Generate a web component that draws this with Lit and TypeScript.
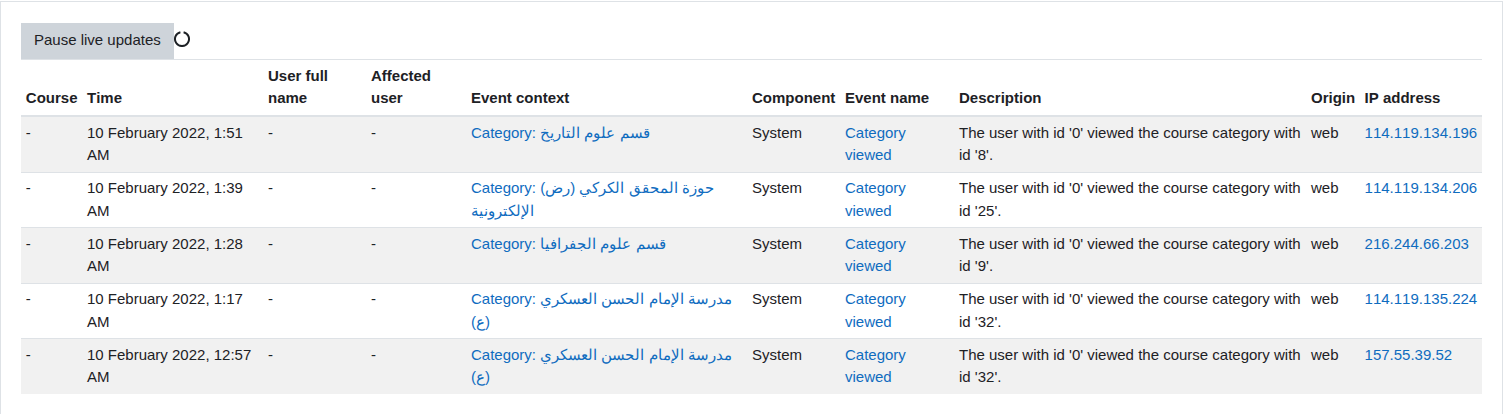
import { LitElement, html, css } from "lit";
import { customElement } from "lit/decorators.js";

const rows = [
  ["10 February 2022, 1:51 AM", "قسم علوم التاريخ", "8", "114.119.134.196"],
  ["10 February 2022, 1:39 AM", "حوزة المحقق الكركي (رض) الإلكترونية", "25", "114.119.134.206"],
  ["10 February 2022, 1:28 AM", "قسم علوم الجفرافيا", "9", "216.244.66.203"],
  ["10 February 2022, 1:17 AM", "مدرسة الإمام الحسن العسكري (ع)", "32", "114.119.135.224"],
  ["10 February 2022, 12:57 AM", "مدرسة الإمام الحسن العسكري (ع)", "32", "157.55.39.52"],
];

@customElement("app-root")
export class AppRoot extends LitElement {
  static styles = css`
    :host {
      display: block;
      font-family: "Liberation Sans", Arial, sans-serif;
      font-size: 15px;
      line-height: 22.5px;
      color: #1d2125;
      font-kerning: none;
    }
    .page {
      box-sizing: border-box;
      height: 413px;
      margin-top: 1px;
      overflow: hidden;
      border: 1px solid #dee2e6;
      border-bottom: 0;
      padding: 21px 20px 0 20px;
    }
    .bar {
      display: flex;
      align-items: flex-start;
    }
    .btn {
      background: #ced4da;
      color: #1d2125;
      border: 1px solid #ced4da;
      padding: 5px 12px 7px;
      font: inherit;
      height: 36px;
      box-sizing: border-box;
      border-radius: 0;
    }
    .spin {
      display: block;
      margin-top: 8px;
      width: 16px;
      height: 16px;
    }
    table {
      width: 100%;
      table-layout: fixed;
      border-collapse: collapse;
    }
    th, td {
      box-sizing: border-box;
      padding: 4.45px 4.8px 5.05px;
      vertical-align: top;
      border-top: 1px solid #dee2e6;
      text-align: left;
    }
    th {
      vertical-align: bottom;
      font-weight: 700;
      padding-top: 4.95px;
      padding-bottom: 5.25px;
      border-bottom: 2px solid #dee2e6;
    }
    th:nth-child(1) { width: 61.2px; }
    th:nth-child(2) { width: 181px; }
    th:nth-child(3) { width: 103px; }
    th:nth-child(4) { width: 100px; }
    th:nth-child(5) { width: 281px; }
    th:nth-child(6) { width: 93px; }
    th:nth-child(7) { width: 114px; }
    th:nth-child(8) { width: 352px; }
    th:nth-child(9) { width: 53.6px; }
    tbody tr:nth-child(odd) {
      background: #f1f1f1;
    }
    a {
      color: #0f6cbf;
      text-decoration: none;
    }
    .ar {
      font-kerning: normal;
    }
  `;

  render() {
    return html`
      <div class="page">
        <div class="bar">
          <button class="btn">Pause live updates</button>
          <svg class="spin" viewBox="0 0 16 16" fill="none">
            <path d="M9.6 1.2A7 7 0 1 1 6.4 1.2" stroke="#1d2125" stroke-width="2" />
          </svg>
        </div>
        <table>
          <thead>
            <tr>
              <th>Course</th>
              <th>Time</th>
              <th>User full name</th>
              <th>Affected user</th>
              <th>Event context</th>
              <th>Component</th>
              <th>Event name</th>
              <th>Description</th>
              <th>Origin</th>
              <th>IP address</th>
            </tr>
          </thead>
          <tbody>
            ${rows.map(
              ([time, ctx, id, ip]) => html`
                <tr>
                  <td>-</td>
                  <td>${time}</td>
                  <td>-</td>
                  <td>-</td>
                  <td><a href="#">Category: <span class="ar">${ctx}</span></a></td>
                  <td>System</td>
                  <td><a href="#">Category viewed</a></td>
                  <td>The user with id '0' viewed the course category with id '${id}'.</td>
                  <td>web</td>
                  <td><a href="#">${ip}</a></td>
                </tr>
              `
            )}
          </tbody>
        </table>
      </div>
    `;
  }
}
